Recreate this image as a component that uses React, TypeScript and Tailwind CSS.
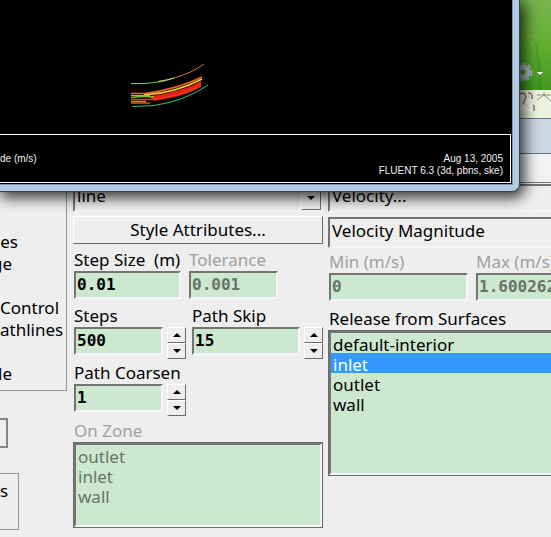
import type { ReactNode } from 'react'
import clsx from 'clsx'

const sunken =
  'border-2 border-t-[#747474] border-l-[#747474] border-r-[#f6f6f6] border-b-[#f6f6f6]'
const raised =
  'border border-t-white border-l-white border-r-[#6a6a6a] border-b-[#6a6a6a]'

const displayOptions = [
  { text: 'es', width: 'w-[18px]' },
  { text: 'ge', width: 'w-3' },
  { text: '', width: 'w-3' },
  { text: 'Control', width: 'w-fit' },
  { text: 'athlines', width: 'w-fit' },
  { text: '', width: 'w-3' },
  { text: 'le', width: 'w-3' },
]
const zones = ['outlet', 'inlet', 'wall']
const surfaces = ['default-interior', 'inlet', 'outlet', 'wall']

type FieldProps = {
  id: string
  label: string
  value: string
  className?: string
  disabled?: boolean
  spinner?: boolean
}

const Arrow = ({ up }: { up?: boolean }) => (
  <svg width="8" height="4" viewBox="0 0 8 4">
    <path d={up ? 'M4 0L8 4H0z' : 'M0 0H8L4 4z'} fill="#000" />
  </svg>
)

const Label = ({
  id,
  disabled,
  children,
}: {
  id: string
  disabled?: boolean
  children: ReactNode
}) => (
  <label
    htmlFor={id}
    className={clsx(
      'block h-6 leading-[26px] whitespace-pre',
      disabled ? 'text-[#a0a0a0]' : 'text-black'
    )}
  >
    {children}
  </label>
)

const Field = ({ id, label, value, className, disabled, spinner }: FieldProps) => (
  <div className="shrink-0">
    <Label id={id} disabled={disabled}>
      {label}
    </Label>
    <div className="flex gap-1">
      <input
        id={id}
        defaultValue={value}
        disabled={disabled}
        className={clsx(
          'h-7 bg-[#cce8cf] px-px pb-0.5 font-["DejaVu_Sans_Mono",monospace] text-[16px] font-bold outline-none',
          sunken,
          disabled ? 'text-[#66756a]' : 'text-black',
          className
        )}
      />
      {spinner && (
        <div className="flex flex-col">
          {[true, false].map((up) => (
            <button
              key={String(up)}
              aria-label={`${up ? 'Increase' : 'Decrease'} ${label}`}
              className={clsx(
                'flex h-4 w-[19px] items-center justify-center bg-[#eeeeee]',
                raised
              )}
            >
              <Arrow up={up} />
            </button>
          ))}
        </div>
      )}
    </div>
  </div>
)

const DropDown = ({
  name,
  value,
  className,
}: {
  name: string
  value: string
  className: string
}) => (
  <div className={clsx('flex', sunken, className)}>
    <select
      aria-label={name}
      className="min-w-0 flex-1 appearance-none bg-transparent px-0.5 pb-1 leading-5 outline-none"
    >
      <option>{value}</option>
    </select>
    <span className={clsx('flex w-5 items-center justify-center', raised)}>
      <Arrow />
    </span>
  </div>
)

const ListBox = ({
  id,
  items,
  selected = [],
  disabled,
  className,
}: {
  id: string
  items: string[]
  selected?: string[]
  disabled?: boolean
  className: string
}) => (
  <div className={clsx('border border-[#6a6a6a]', className)}>
    <select
      id={id}
      multiple
      defaultValue={selected}
      disabled={disabled}
      className={clsx(
        'block size-full overflow-hidden bg-[#cce8cf] p-0 outline-none disabled:opacity-100',
        sunken
      )}
    >
      {items.map((item) => (
        <option
          key={item}
          className={clsx(
            'h-5 min-h-0 px-0.5 py-0 leading-4 checked:bg-[#3399ff] checked:bg-linear-to-r checked:from-[#3399ff] checked:to-[#3399ff] checked:text-white',
            disabled ? 'text-[#66756a]' : 'text-black'
          )}
        >
          {item}
        </option>
      ))}
    </select>
  </div>
)

const Wallpaper = () => (
  <svg width="31" height="118" viewBox="0 0 31 118" className="block">
    <defs>
      <linearGradient id="grass" x1="0" y1="0" x2="0" y2="1">
        <stop offset="0" stopColor="#79b450" />
        <stop offset="0.5" stopColor="#62ad31" />
        <stop offset="1" stopColor="#439822" />
      </linearGradient>
    </defs>
    <rect width="31" height="90" fill="url(#grass)" />
    <path d="M14 36Q22 60 22 90H18Q19 62 14 36z" fill="#318a1b" opacity=".5" />
    <circle cx="12" cy="39" r="4" fill="none" stroke="#8cc756" opacity=".4" />
    <circle cx="3" cy="72" r="5" fill="none" stroke="#b3bfc4" strokeWidth="5" />
    <circle cx="3" cy="72" r="8" fill="none" stroke="#a3b0b6" strokeWidth="3" strokeDasharray="4 2" />
    <path d="M17 72H23L20 75z" fill="#fff" />
    <rect y="90" width="31" height="28" fill="#ebf3df" />
    <path d="M0 92Q9 90 14 97L10 102L15 111L0 112z" fill="#fbfaf6" />
    <path d="M0 94Q5 91 6 97L3 104M8 93Q13 93 12 99M13 105L14 106V111" fill="none" stroke="#8d7769" strokeWidth="1.500" />
    <path d="M9 95V98M5 104L9 108" stroke="#c9b8a8" />
    <path d="M17 95H31M24 92V95L17 100M24 95L31 101" fill="none" stroke="#858e7b" />
  </svg>
)

const Pathlines = () => (
  <svg width="100" height="60" viewBox="0 0 100 60" fill="none" className="block">
    <path d="M30 41Q62 37 81 26V32Q66 41 34 46z" fill="#e3201a" />
    <path d="M11 28.500H24Q45 27 54 23" stroke="#6bcf62" />
    <path d="M38 26.500Q47 25 54 23" stroke="#d9d05a" />
    <path d="M54 23Q72 18 84 9" stroke="#d97242" />
    <path d="M11 38.500H25Q58 34 82 22" stroke="#ed6630" strokeWidth="1.500" />
    <path d="M24 40Q56 38 82 24" stroke="#f4d02b" strokeWidth="1.500" />
    <path d="M11 40.500H30" stroke="#e9a52c" />
    <path d="M11 42.500Q22 41 34 42" stroke="#71c52c" strokeWidth="1.500" />
    <path d="M11 44.500H31Q59 42 81 30" stroke="#f5321c" strokeWidth="1.500" />
    <path d="M11 46.500H26" stroke="#f0722a" strokeWidth="1.500" />
    <path d="M11 48H30" stroke="#f0a52a" />
    <path d="M12 51.500L34 50.500Q65 46 88 30" stroke="#35c47c" />
  </svg>
)

const GraphicsWindow = () => (
  <div className="absolute top-0 right-[31px] left-0 rounded-br-lg border-r border-b border-[#34465a] bg-[#b4cce2] pr-1.5 pb-1.5 shadow-[3px_4px_14px_2px_rgba(0,0,0,0.75)]">
    <div className="border-r border-b border-[#8194a8] bg-black pr-px pb-px text-[10px] leading-3 text-[#f0f0f0]">
      <div className="h-[134px] pt-[55px] pl-[120px]">
        <Pathlines />
      </div>
      <div className="flex h-[49px] justify-between border border-l-0 border-white pt-[18px] pr-[7px]">
        <p>de (m/s)</p>
        <p className="text-right">
          Aug 13, 2005
          <br />
          FLUENT 6.3 (3d, pbns, ske)
        </p>
      </div>
    </div>
  </div>
)

const App = () => {
  return (
    <div className='relative min-h-screen overflow-hidden bg-[#eeeeee] font-["Liberation_Sans",sans-serif] text-black'>
      <div className="flex justify-end">
        <Wallpaper />
      </div>
      <div className="h-9 border-y border-[#66717b] bg-[#cbd7e2]" />
      <div className="h-[29px] border-b border-[#777777] bg-[#f2f2f2]" />

      <div className='flex pt-px font-["Noto_Sans",sans-serif] text-[17px]'>
        <div className="w-[73px] shrink-0">
          <div className="mr-1.5 border-r border-b border-[#969696] pt-[47px] pb-[5px]">
            {displayOptions.map(({ text, width }, index) => (
              <p
                key={index}
                className={clsx('flex h-[22px] justify-end leading-[22px]', width)}
              >
                {text}
              </p>
            ))}
          </div>
          <button
            aria-label="Display"
            className="mt-[27px] block h-[30px] w-2 border-2 border-l-0 border-[#858585] bg-[#eeeeee]"
          />
          <div className="mt-[25px] h-[57px] w-[19px] border border-l-0 border-[#969696] pt-1">
            s
          </div>
        </div>

        <div className="mr-[5px] w-[250px] shrink-0">
          <DropDown name="Style" value="line" className="h-7" />
          <button
            className={clsx('mt-1 block h-7 w-full bg-[#eeeeee] leading-6', raised)}
          >
            Style Attributes...
          </button>
          <div className="mt-[3px] flex gap-2 pl-px">
            <Field id="step-size" label="Step Size  (m)" value="0.01" className="w-[107px]" />
            <Field id="tolerance" label="Tolerance" value="0.001" className="w-[89px]" disabled />
          </div>
          <div className="mt-1 flex justify-between pl-px">
            <Field id="steps" label="Steps" value="500" className="w-[89px]" spinner />
            <Field id="path-skip" label="Path Skip" value="15" className="w-[108px]" spinner />
          </div>
          <div className="mt-px pl-px">
            <Field id="coarsen" label="Path Coarsen" value="1" className="w-[89px]" spinner />
          </div>
          <div className="mt-0.5 pl-px">
            <Label id="zones" disabled>
              On Zone
            </Label>
          </div>
          <ListBox id="zones" items={zones} className="h-[86px]" disabled />
        </div>

        <div className="min-w-[290px] flex-1">
          <DropDown name="Color by" value="Velocity..." className="h-7" />
          <DropDown
            name="Color by variable"
            value="Velocity Magnitude"
            className="mt-[5px] h-[31px]"
          />
          <div className="mt-px flex gap-2 pl-px">
            <Field id="min" label="Min (m/s)" value="0" className="w-[139px]" disabled />
            <Field id="max" label="Max (m/s)" value="1.600262" className="w-[139px]" disabled />
          </div>
          <div className="mt-[5px] pl-px">
            <Label id="surfaces">Release from Surfaces</Label>
          </div>
          <ListBox
            id="surfaces"
            items={surfaces}
            selected={['inlet']}
            className="h-[146px]"
          />
        </div>
      </div>
      <GraphicsWindow />
    </div>
  )
}

export default App
